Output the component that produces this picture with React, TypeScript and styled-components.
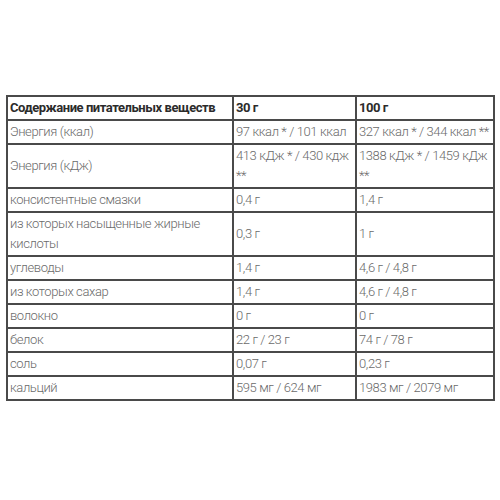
import React from "react";
import styled, { createGlobalStyle } from "styled-components";

const Global = createGlobalStyle`
  html, body { margin: 0; padding: 0; background: #ffffff; }
  body { font-family: Roboto, "Liberation Sans", sans-serif; }
`;

const Page = styled.div`
  width: 500px;
  height: 500px;
  box-sizing: border-box;
  padding: 95px 0 0 6px;
  background: #fff;
  overflow: hidden;
`;

const Table = styled.table`
  width: 487px;
  border-collapse: collapse;
  table-layout: fixed;
  border: 2px solid #4a4a4a;
`;

const Cell = styled.td<{ $head?: boolean }>`
  border: 2px solid #4a4a4a;
  padding: 1px 2px 1px 2px;
  line-height: 20px;
  font-size: 13px;
  letter-spacing: ${(p) => (p.$head ? "-0.45px" : "-0.4px")};
  font-weight: ${(p) => (p.$head ? 700 : 300)};
  color: ${(p) => (p.$head ? "#2b2b2b" : "#6a6a6a")};
  vertical-align: middle;
  text-align: left;
  white-space: normal;
`;

const Footnote = styled.div`
  height: 5px;
  overflow: hidden;
  margin-top: 2px;
  padding-left: 4px;
  font-size: 13px;
  line-height: 20px;
  font-weight: 300;
  color: #c8c8c8;
`;

const rows: [string, string, string][] = [
  ["Энергия (ккал)", "97 ккал * / 101 ккал", "327 ккал * / 344 ккал **"],
  ["Энергия (кДж)", "413 кДж * / 430 кдж **", "1388 кДж * / 1459 кДж **"],
  ["консистентные смазки", "0,4 г", "1,4 г"],
  ["из которых насыщенные жирные кислоты", "0,3 г", "1 г"],
  ["углеводы", "1,4 г", "4,6 г / 4,8 г"],
  ["из которых сахар", "1,4 г", "4,6 г / 4,8 г"],
  ["волокно", "0 г", "0 г"],
  ["белок", "22 г / 23 г", "74 г / 78 г"],
  ["соль", "0,07 г", "0,23 г"],
  ["кальций", "595 мг / 624 мг", "1983 мг / 2079 мг"],
];

export default function App() {
  return (
    <>
      <Global />
      <Page>
        <Table>
          <colgroup>
            <col style={{ width: 226 }} />
            <col style={{ width: 123 }} />
            <col style={{ width: 138 }} />
          </colgroup>
          <tbody>
            <tr>
              <Cell $head>Содержание питательных веществ</Cell>
              <Cell $head>30 г</Cell>
              <Cell $head>100 г</Cell>
            </tr>
            {rows.map((r) => (
              <tr key={r[0]}>
                <Cell>{r[0]}</Cell>
                <Cell>{r[1]}</Cell>
                <Cell>{r[2]}</Cell>
              </tr>
            ))}
          </tbody>
        </Table>
        <Footnote>* Женщинам в день ** Мужчинам в день</Footnote>
      </Page>
    </>
  );
}
